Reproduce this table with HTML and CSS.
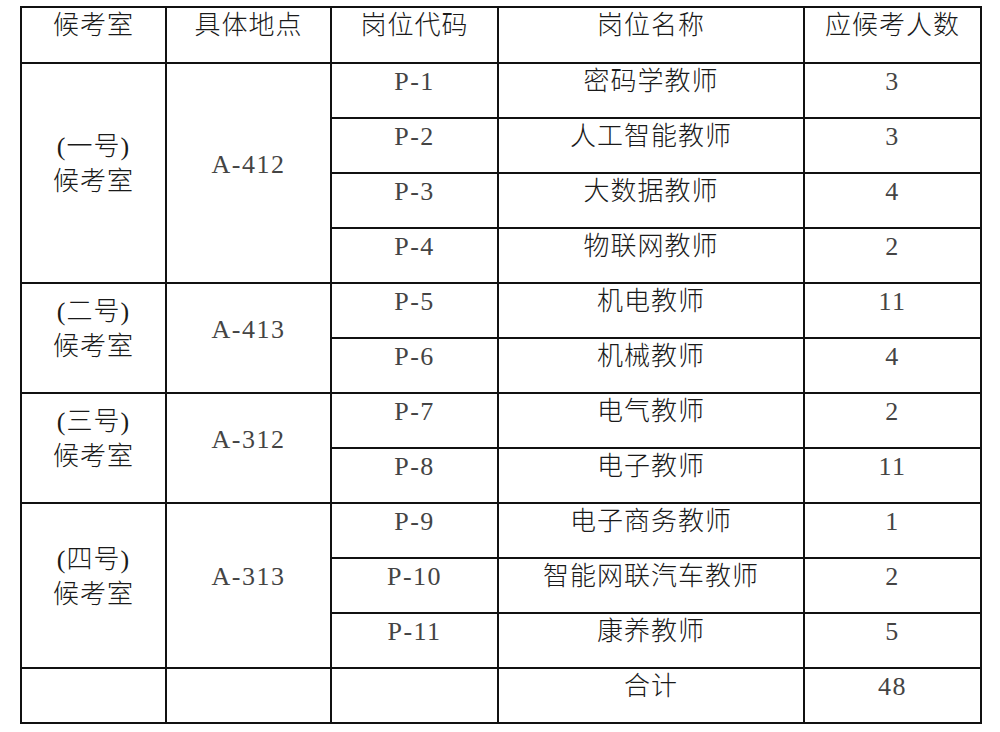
FILE: index.html
```html
<!DOCTYPE html>
<html lang="zh-CN">
<head>
<meta charset="utf-8">
<link rel="stylesheet" href="styles.css">
</head>
<body>
<table class="grid">
  <colgroup>
    <col class="c1"><col class="c2"><col class="c3"><col class="c4"><col class="c5">
  </colgroup>
  <tr class="head">
    <td>候考室</td><td>具体地点</td><td>岗位代码</td><td>岗位名称</td><td>应候考人数</td>
  </tr>
  <tr>
    <td rowspan="4">(一号)<br>候考室</td><td rowspan="4" class="lat">A-412</td>
    <td class="lat">P-1</td><td>密码学教师</td><td class="lat">3</td>
  </tr>
  <tr><td class="lat">P-2</td><td>人工智能教师</td><td class="lat">3</td></tr>
  <tr><td class="lat">P-3</td><td>大数据教师</td><td class="lat">4</td></tr>
  <tr><td class="lat">P-4</td><td>物联网教师</td><td class="lat">2</td></tr>
  <tr>
    <td rowspan="2">(二号)<br>候考室</td><td rowspan="2" class="lat">A-413</td>
    <td class="lat">P-5</td><td>机电教师</td><td class="lat">11</td>
  </tr>
  <tr><td class="lat">P-6</td><td>机械教师</td><td class="lat">4</td></tr>
  <tr>
    <td rowspan="2">(三号)<br>候考室</td><td rowspan="2" class="lat">A-312</td>
    <td class="lat">P-7</td><td>电气教师</td><td class="lat">2</td>
  </tr>
  <tr><td class="lat">P-8</td><td>电子教师</td><td class="lat">11</td></tr>
  <tr>
    <td rowspan="3">(四号)<br>候考室</td><td rowspan="3" class="lat">A-313</td>
    <td class="lat">P-9</td><td>电子商务教师</td><td class="lat">1</td>
  </tr>
  <tr><td class="lat">P-10</td><td>智能网联汽车教师</td><td class="lat">2</td></tr>
  <tr><td class="lat">P-11</td><td>康养教师</td><td class="lat">5</td></tr>
  <tr>
    <td></td><td></td><td></td><td>合计</td><td class="lat">48</td>
  </tr>
</table>
</body>
</html>
```

FILE: styles.css
```css
html, body {
  margin: 0;
  padding: 0;
  background: #ffffff;
}
body {
  padding: 6px 0 0 20px;
  font-family: "Liberation Serif", "Noto Sans CJK SC", serif;
  color: #1a1a1a;
}
.grid {
  border-collapse: collapse;
  table-layout: fixed;
  width: 962px;
}
.c1 { width: 145px; }
.c2 { width: 165px; }
.c3 { width: 167px; }
.c4 { width: 306px; }
.c5 { width: 177px; }
.grid tr {
  height: 55px;
}
.grid tr.head {
  height: 56px;
}
.grid td {
  border: 2px solid #111111;
  padding: 0 0 18px 0;
  text-align: center;
  vertical-align: middle;
  font-size: 26px;
  line-height: 35px;
  font-weight: 300;
  letter-spacing: 1px;
}
.grid tr.head td {
  padding-bottom: 19px;
}
.grid td.lat {
  letter-spacing: 1.5px;
  color: #444444;
}
```
